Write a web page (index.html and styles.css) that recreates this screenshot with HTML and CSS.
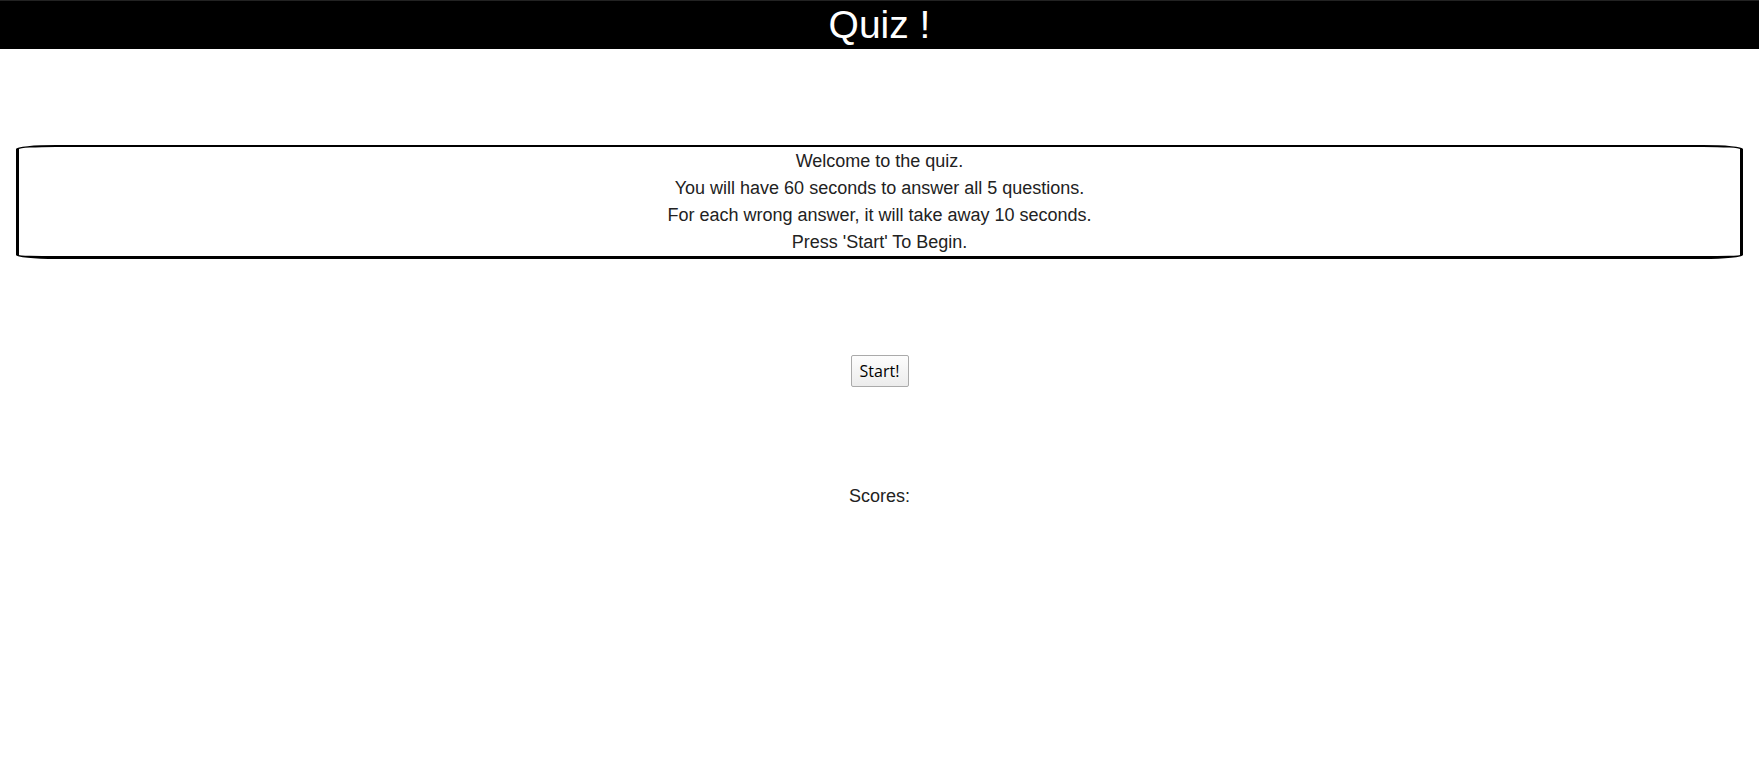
FILE: index.html
```html
<!DOCTYPE html>
<html>
<head>
<meta charset="utf-8">
<title>Quiz</title>
<link rel="stylesheet" href="styles.css">
</head>
<body>
<header class="top-bar">
  <h1 class="title">Quiz !</h1>
</header>
<main class="content">
  <section class="intro">
    <p>Welcome to the quiz.</p>
    <p>You will have 60 seconds to answer all 5 questions.</p>
    <p>For each wrong answer, it will take away 10 seconds.</p>
    <p>Press 'Start' To Begin.</p>
  </section>
  <div class="actions">
    <button class="start-btn" type="button">Start!</button>
  </div>
  <div class="scores">Scores:</div>
</main>
</body>
</html>
```
FILE: styles.css
```css
html, body {
  margin: 0;
  padding: 0;
  background: #fff;
}
body {
  font-family: "Liberation Sans", Arial, sans-serif;
  font-size: 18px;
  line-height: 27px;
  color: #222;
}
.top-bar {
  background: #000;
  border-top: 1px solid #222;
  height: 48px;
  text-align: center;
}
.title {
  margin: 0;
  font-size: 39px;
  font-weight: normal;
  line-height: 48px;
  color: #fff;
}
.content {
  padding: 96px 16px 0;
}
.intro {
  border-style: solid;
  border-color: #000;
  border-width: 2px 3px 3px 3px;
  border-radius: 40px / 4px;
  padding-top: 1px;
  text-align: center;
}
.intro p {
  margin: 0;
}
.actions {
  display: flex;
  justify-content: center;
  padding-top: 96px;
}
.start-btn {
  font-family: "Open Sans", "DejaVu Sans", sans-serif;
  font-size: 16px;
  color: #000;
  height: 32px;
  width: 58px;
  padding: 0;
  border: 1px solid #aaa;
  border-radius: 2px;
  background: linear-gradient(#fdfdfd, #ececec);
}
.scores {
  text-align: center;
  padding-top: 96px;
}
```
